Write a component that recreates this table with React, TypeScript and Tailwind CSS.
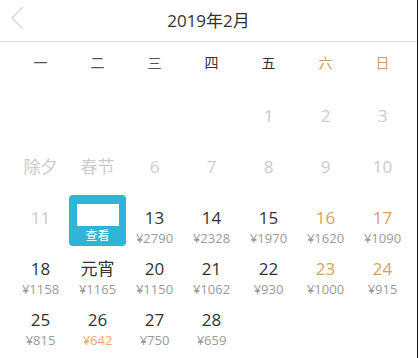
import { ChevronLeft } from "lucide-react";

type Day = {
  label: string;
  price?: string;
  tone?: "past" | "normal" | "weekend";
  cheap?: boolean;
  selected?: boolean;
};

const weekdays = ["一", "二", "三", "四", "五", "六", "日"];

const rows: (Day | null)[][] = [
  [null, null, null, null, { label: "1", tone: "past" }, { label: "2", tone: "past" }, { label: "3", tone: "past" }],
  [
    { label: "除夕", tone: "past" },
    { label: "春节", tone: "past" },
    { label: "6", tone: "past" },
    { label: "7", tone: "past" },
    { label: "8", tone: "past" },
    { label: "9", tone: "past" },
    { label: "10", tone: "past" },
  ],
  [
    { label: "11", tone: "past" },
    { label: "12", selected: true },
    { label: "13", price: "¥2790" },
    { label: "14", price: "¥2328" },
    { label: "15", price: "¥1970" },
    { label: "16", price: "¥1620", tone: "weekend" },
    { label: "17", price: "¥1090", tone: "weekend" },
  ],
  [
    { label: "18", price: "¥1158" },
    { label: "元宵", price: "¥1165" },
    { label: "20", price: "¥1150" },
    { label: "21", price: "¥1062" },
    { label: "22", price: "¥930" },
    { label: "23", price: "¥1000", tone: "weekend" },
    { label: "24", price: "¥915", tone: "weekend" },
  ],
  [
    { label: "25", price: "¥815" },
    { label: "26", price: "¥642", cheap: true },
    { label: "27", price: "¥750" },
    { label: "28", price: "¥659" },
    null,
    null,
    null,
  ],
];

function DayCell({ day }: { day: Day | null }) {
  if (!day) return <div className="h-[51px]" />;

  if (day.selected) {
    return (
      <div className="h-[51px] relative">
        <div className="absolute left-0 right-0 top-[1px] h-[51px] rounded-[4px] bg-[#2fb3d7] flex flex-col items-center pt-[9px]">
          <div className="w-[42px] h-[22px] bg-white" />
          <div className="text-[12px] leading-[16px] text-white mt-[2px]">查看</div>
        </div>
      </div>
    );
  }

  const color =
    day.tone === "past" ? "text-[#cbcbcb]" : day.tone === "weekend" ? "text-[#d6a35c]" : "text-[#333333]";

  return (
    <div className="h-[51px] flex flex-col items-center pt-[14px]">
      <div className={`text-[17px] leading-[20px] ${color}`}>{day.label}</div>
      {day.price && (
        <div className={`text-[13px] leading-[16px] mt-[2px] ${day.cheap ? "text-[#f2a46e]" : "text-[#9a9a9a]"}`}>
          {day.price}
        </div>
      )}
    </div>
  );
}

export default function App() {
  return (
    <div
      className="w-[420px] h-[358px] bg-white flex overflow-hidden"
      style={{ fontFamily: '"Open Sans", "Noto Sans CJK SC", sans-serif' }}
    >
      <div className="w-[417px] shrink-0">
        <div className="h-[42px] relative flex items-center justify-center border-b border-[#e2e2e2]">
          <ChevronLeft className="absolute left-[-3px] top-[-2px] w-[40px] h-[40px] text-[#e0e0e0]" strokeWidth={1.2} />
          <span className="text-[17px] text-[#333333]">2019年2月</span>
        </div>
        <div className="pl-[12px] pr-[6px]">
          <div className="grid grid-cols-7 h-[40px] items-center">
            {weekdays.map((w, i) => (
              <div
                key={w}
                className={`text-center text-[14px] ${
                  i >= 5 ? "text-[#c9a063]" : i >= 3 ? "text-[#333333]" : "text-[#555555]"
                }`}
              >
                {w}
              </div>
            ))}
          </div>
          <div className="grid grid-cols-7 mt-[10px]">
            {rows.flat().map((d, i) => (
              <DayCell key={i} day={d} />
            ))}
          </div>
        </div>
      </div>
      <div className="w-[1px] bg-[#111111]" />
    </div>
  );
}
